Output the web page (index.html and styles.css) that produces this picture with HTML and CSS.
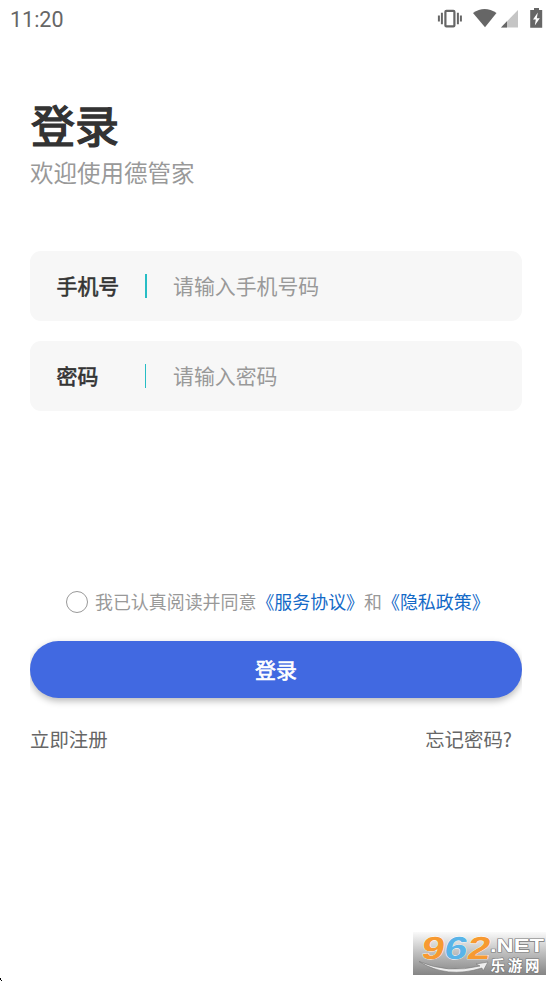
FILE: index.html
```html
<!DOCTYPE html>
<html lang="zh-CN">
<head>
<meta charset="utf-8">
<title>登录</title>
<link rel="stylesheet" href="styles.css">
</head>
<body>
<header class="status">
  <span class="clock">11:20</span>
  <svg class="status-icons" width="112" height="38" viewBox="0 0 112 38">
    <g fill="none" stroke="#666" stroke-width="2">
      <rect x="10.4" y="10.8" width="9" height="15.6" rx="1" stroke-width="2.2"/>
      <path d="M6.9 12.8v11.5M3.9 15.5v6M22.9 12.8v11.5M25.9 15.5v6"/>
    </g>
    <path d="M38 13Q49.5 5.2 61.5 13L50 27.3z" fill="#666"/>
    <path d="M66 27.5L83 10v17.5z" fill="#c5c5c5"/>
    <path d="M66 27.5l6-6.2v6.2z" fill="#666"/>
    <path d="M95.2 10H99V8h5v2h3.2v17.8h-12z" fill="#666"/>
    <path d="M102.8 12.5l-4.8 7h2.8l-1 6 5-7.2h-3z" fill="#fff"/>
  </svg>
</header>
<main class="login">
  <h1 class="title">登录</h1>
  <p class="subtitle">欢迎使用德管家</p>
  <form class="fields">
    <div class="field"><span class="label">手机号</span><i class="divider divider-wide"></i><span class="hint">请输入手机号码</span></div>
    <div class="field"><span class="label">密码</span><i class="divider"></i><span class="hint">请输入密码</span></div>
  </form>
  <div class="agreement"><i class="radio"></i><span>我已认真阅读并同意<a>《服务协议》</a>和<a>《隐私政策》</a></span></div>
  <div class="submit-area"><div class="submit">登录</div></div>
  <nav class="links"><span>立即注册</span><span>忘记密码?</span></nav>
</main>
<svg class="watermark" width="133" height="43" viewBox="0 0 133 43">
  <defs>
    <linearGradient id="shade" x1="0" y1="0" x2="0" y2="1">
      <stop offset="0" stop-color="#fafafa"/><stop offset=".5" stop-color="#bdbdbd"/><stop offset="1" stop-color="#858585"/>
    </linearGradient>
  </defs>
  <rect width="133" height="43" fill="url(#shade)"/>
  <g transform="translate(7 26.5) skewX(-10)">
    <text class="mark-number" textLength="69" lengthAdjust="spacingAndGlyphs"><tspan fill="#f79a32">9</tspan><tspan fill="#59b4e8">6</tspan><tspan fill="#f79a32">2</tspan></text>
  </g>
  <path d="M6 29.5Q35 42 67 34l-4-2 12-2-5 9-1-3Q34 47 6 29.5z" fill="#eee" stroke="#777" stroke-width=".6"/>
  <text class="mark-domain" x="77" y="20" textLength="54" lengthAdjust="spacingAndGlyphs">.NET</text>
  <text class="mark-name" x="77.5" y="38.5" textLength="49">乐游网</text>
</svg>
<svg class="speck" width="3" height="4" viewBox="0 0 3 4"><path d="M0 0h1v2H0zM1 2h1v1H1z"/></svg>
</body>
</html>
```

FILE: styles.css
```css
* { box-sizing: border-box; }
body {
  margin: 0;
  position: relative;
  height: 981px;
  overflow: hidden;
  background: #fff;
  color: #333;
  font-family: "Noto Sans CJK SC", sans-serif;
}
.status {
  display: flex;
  justify-content: space-between;
  height: 38px;
  padding: 0 5px 0 10px;
}
.clock {
  font: 400 21.5px/39px Roboto, sans-serif;
  color: #666;
}
.login { padding: 0 30px; }
.title {
  margin: 53px 0 0;
  padding-left: 1px;
  font-size: 44px;
  line-height: 66px;
  font-weight: 400;
  -webkit-text-stroke: 1.4px #333;
}
.subtitle {
  margin: 0;
  font-size: 23.5px;
  line-height: 30px;
  color: #999;
}
.fields {
  display: grid;
  gap: 20px;
  margin-top: 64px;
}
.field {
  display: flex;
  align-items: center;
  height: 70px;
  padding-left: 26px;
  border-radius: 11px;
  background: #f7f7f7;
  font-size: 20.9px;
}
.label, .hint { padding-bottom: 2px; }
.label { width: 89px; padding-left: .5px; -webkit-text-stroke: .6px #333; }
.divider { width: 1px; height: 24px; margin-right: 27px; background: #27bdc5; }
.divider-wide { width: 2px; margin-right: 26px; }
.hint { color: #999; }
.agreement {
  display: flex;
  align-items: center;
  height: 30px;
  margin-top: 176px;
  padding-left: 36px;
  font-size: 17.95px;
  color: #999;
  white-space: nowrap;
}
.agreement span { padding-bottom: 2px; }
.agreement a { color: #1269c7; }
.radio {
  width: 22px;
  height: 22px;
  margin-right: 7px;
  border: 1.5px solid #999;
  border-radius: 50%;
}
.submit-area {
  padding: 24px 0 17px;
  overflow: hidden;
}
.submit {
  height: 57px;
  border-radius: 29px;
  background: #4169e1;
  box-shadow: 0 3px 7px rgba(0, 0, 0, .28);
  color: #fff;
  font-size: 20.9px;
  line-height: 56px;
  -webkit-text-stroke: .6px #fff;
  text-align: center;
}
.links {
  display: flex;
  justify-content: space-between;
  padding-right: 10px;
  margin-top: 9px;
  font-size: 19.4px;
  line-height: 30px;
  color: #666;
}
.watermark { position: absolute; left: 413px; top: 932px; }
.mark-number { font: 700 32px "Liberation Sans", sans-serif; stroke: #fff; stroke-width: .7px; paint-order: stroke; }
.mark-domain { font: 700 18px "Liberation Sans", sans-serif; fill: #fff; stroke: #777; stroke-width: 1.2px; paint-order: stroke; }
.mark-name { font-size: 14.5px; font-weight: 700; fill: #fff; stroke: #777; stroke-width: 1.2px; paint-order: stroke; }
.speck { position: absolute; left: 0; top: 978px; }
```
